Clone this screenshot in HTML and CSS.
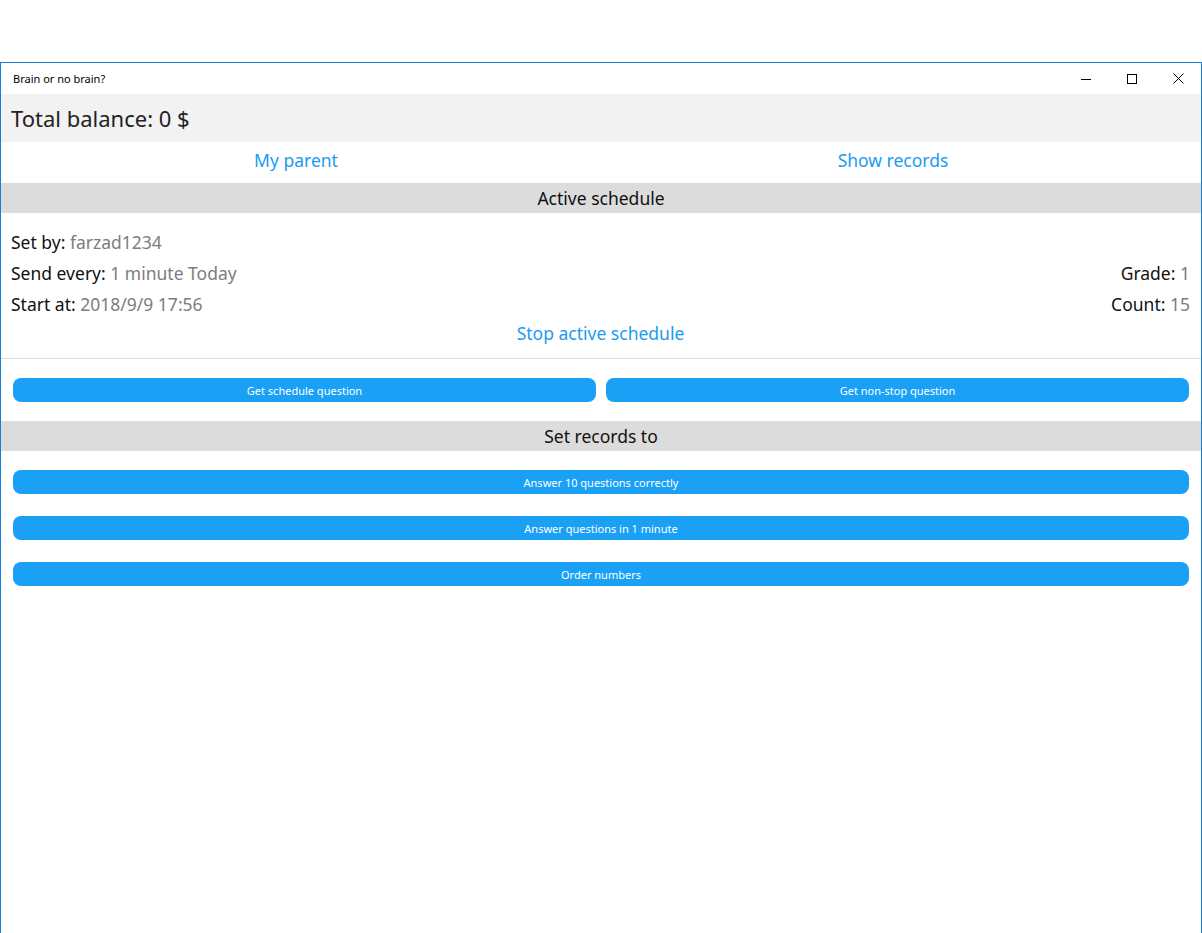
FILE: index.html
```html
<!DOCTYPE html>
<html>
<head>
<meta charset="utf-8">
<link rel="stylesheet" href="styles.css">
</head>
<body>
<div class="window">
  <div class="titlebar">
    <div class="title">Brain or no brain?</div>
    <div class="controls">
      <div class="ctl"><svg width="10" height="10" viewBox="0 0 10 10"><path d="M0 5.5H10" stroke="#000" stroke-width="1"/></svg></div>
      <div class="ctl"><svg width="10" height="10" viewBox="0 0 10 10"><rect x="0.5" y="0.5" width="9" height="9" fill="none" stroke="#000" stroke-width="1"/></svg></div>
      <div class="ctl"><svg width="11" height="11" viewBox="0 0 11 11"><path d="M0.5 0.5L10.5 10.5M10.5 0.5L0.5 10.5" stroke="#000" stroke-width="1"/></svg></div>
    </div>
  </div>
  <div class="balance">Total balance: 0 $</div>
  <div class="links">
    <div class="link">My parent</div>
    <div class="link">Show records</div>
  </div>
  <div class="section-head">Active schedule</div>
  <div class="info">
    <div class="row"><span><span class="lbl">Set by:</span> <span class="val">farzad1234</span></span></div>
    <div class="row"><span><span class="lbl">Send every:</span> <span class="val">1 minute Today</span></span><span><span class="lbl">Grade:</span> <span class="val">1</span></span></div>
    <div class="row"><span><span class="lbl">Start at:</span> <span class="val">2018/9/9 17:56</span></span><span><span class="lbl">Count:</span> <span class="val">15</span></span></div>
    <div class="stop">Stop active schedule</div>
  </div>
  <div class="q-buttons">
    <div class="btn">Get schedule question</div>
    <div class="btn">Get non-stop question</div>
  </div>
  <div class="section-head">Set records to</div>
  <div class="record-buttons">
    <div class="btn">Answer 10 questions correctly</div>
    <div class="btn">Answer questions in 1 minute</div>
    <div class="btn">Order numbers</div>
  </div>
</div>
</body>
</html>
```
FILE: styles.css
```css
html, body {
  margin: 0;
  padding: 0;
  background: #fff;
}
body {
  font-family: "Noto Sans", "Open Sans", sans-serif;
  padding-top: 62px;
  height: 871px;
  overflow: hidden;
}
.window {
  border: 1px solid #1a7fd4;
  border-bottom: none;
  height: 900px;
  box-sizing: border-box;
}
.titlebar {
  height: 31px;
  display: flex;
  align-items: center;
  justify-content: space-between;
}
.title {
  font-size: 11px;
  padding-left: 12px;
  color: #000;
}
.controls {
  display: flex;
  height: 31px;
}
.ctl {
  width: 46px;
  display: flex;
  align-items: center;
  justify-content: center;
}
.balance {
  height: 48px;
  background: #f2f2f2;
  font-size: 22px;
  color: #222;
  padding-left: 10px;
  display: flex;
  align-items: center;
}
.links {
  height: 41px;
  display: grid;
  grid-template-columns: 1fr 1fr;
  column-gap: 7px;
  padding-right: 13px;
  padding-bottom: 5px;
  box-sizing: border-box;
  align-items: center;
}
.link {
  text-align: center;
  color: #1b9bf0;
  font-size: 17.5px;
}
.section-head {
  height: 30px;
  background: #dcdcdc;
  text-align: center;
  font-size: 17.5px;
  line-height: 30px;
  color: #111;
}
.info {
  padding: 14px 11px 10px 10px;
  border-bottom: 1px solid #dcdcdc;
}
.row {
  display: flex;
  justify-content: space-between;
  height: 31px;
  line-height: 31px;
  font-size: 17.5px;
}
.lbl { color: #111; }
.val { color: #7d7d7d; }
.stop {
  text-align: center;
  color: #1b9bf0;
  font-size: 17.5px;
  height: 28px;
  line-height: 26px;
}
.q-buttons {
  display: grid;
  grid-template-columns: 1fr 1fr;
  gap: 10px;
  padding: 19px 12px 19px 12px;
}
.btn {
  background: #1aa1f5;
  color: #fff;
  height: 24px;
  border-radius: 8px;
  font-size: 11px;
  display: flex;
  align-items: center;
  justify-content: center;
}
.record-buttons {
  display: flex;
  flex-direction: column;
  gap: 22px;
  padding: 19px 12px;
}
```
